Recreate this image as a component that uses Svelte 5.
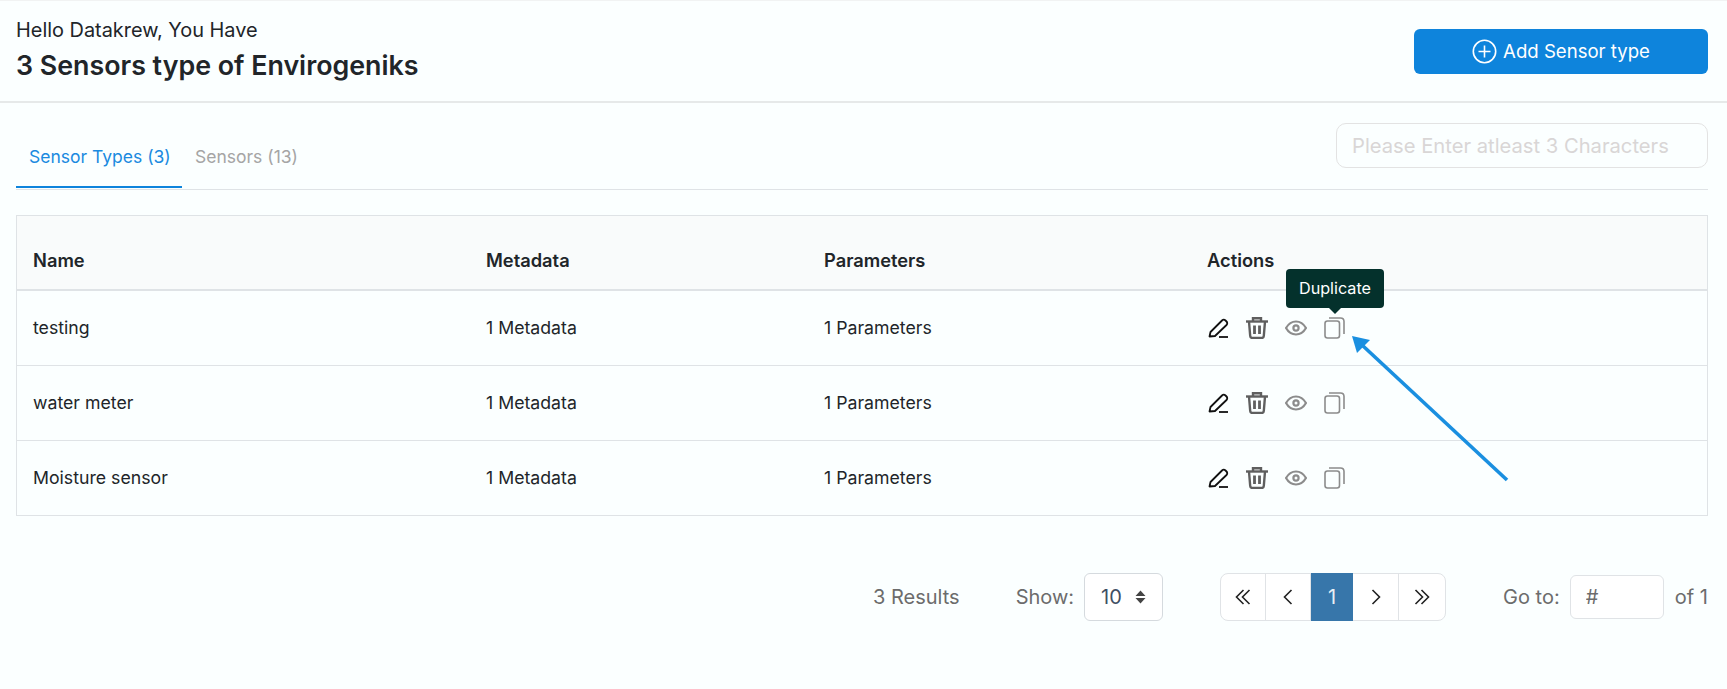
<script>
	const rows = ["testing", "water meter", "Moisture sensor"];
</script>

<div class="page">
	<header class="top">
		<div class="intro">
			<p class="hello">Hello Datakrew, You Have</p>
			<h1>3 Sensors type of Envirogeniks</h1>
		</div>
		<button class="add" type="button">
			<svg width="25" height="25" viewBox="0 0 25 25" fill="none" stroke="#fff">
				<circle cx="12.5" cy="12.5" r="11.2" stroke-width="1.6" />
				<path d="M12.5 6.5v12M6.5 12.5h12" stroke-width="1.6" />
			</svg>
			Add Sensor type
		</button>
	</header>

	<main class="content">
		<div class="tabbar">
			<div class="tabs">
				<span class="tab active">Sensor Types (3)</span>
				<span class="tab">Sensors (13)</span>
			</div>
			<input class="search" placeholder="Please Enter atleast 3 Characters" />
		</div>

		<div class="table">
			<div class="row head">
				<div>Name</div>
				<div>Metadata</div>
				<div>Parameters</div>
				<div>Actions</div>
			</div>
			{#each rows as name, i}
				<div class="row">
					<div>{name}</div>
					<div>1 Metadata</div>
					<div>1 Parameters</div>
					<div class="actions">
						<svg width="22" height="22" viewBox="0 0 22 22" fill="none" stroke="#111" stroke-width="1.8" stroke-linejoin="round">
							<path d="M2.500 19.500L3.500 15 15 3.500c1-1 2.500-1 3.500 0l1 1c1 1 1 2.500 0 3.500L8 19z" />
							<path d="M12 20h9" />
						</svg>
						<svg class="trash" width="22" height="22" viewBox="0 0 22 22" fill="none" stroke="#5f5f5f" stroke-width="2.400">
							<path d="M0 4.500h22" />
							<path d="M7 4.500V1.200h8v3.300" />
							<path d="M3 4.500l1.200 14.500c.1 1.200.8 1.900 1.900 1.900h9.800c1.100 0 1.800-.7 1.900-1.900L19 4.500" />
							<path d="M8.500 8.500v8.500M13.500 8.500v8.500" stroke-width="2.800" />
						</svg>
						<svg class="eye" width="22" height="16" viewBox="0 0 22 16" fill="none" stroke="#8c8c8c" stroke-width="2.200">
							<path d="M1 8c2.600-4.400 6-6.500 10-6.500S18.400 3.600 21 8c-2.600 4.400-6 6.500-10 6.500S3.600 12.400 1 8z" />
							<circle cx="11" cy="8" r="2.600" />
						</svg>
						<svg class="copy" width="21" height="22" viewBox="0 0 21 22" fill="none" stroke="#8c8c8c" stroke-width="1.600">
							<rect x="1" y="4" width="14.500" height="17" rx="2.500" />
							<path d="M5 1h11.500c2 0 3.500 1.500 3.500 3.500V17" />
						</svg>
						{#if i === 0}
							<div class="tooltip">Duplicate</div>
						{/if}
					</div>
				</div>
			{/each}
		</div>

		<div class="pager">
			<span class="results">3 Results</span>
			<span class="show">Show:</span>
			<div class="select">
				10
				<svg width="11" height="14" viewBox="0 0 11 14" fill="#444"><path d="M5.500 .5l5 5.500H.5zM5.500 13.500L.5 8h10z" /></svg>
			</div>
			<div class="pages">
				<span class="page-btn">
					<svg width="16" height="16" viewBox="0 0 16 16" fill="none" stroke="#222" stroke-width="1.600"><path d="M8.500 1L1.500 8l7 7M14.500 1l-7 7 7 7" /></svg>
				</span>
				<span class="page-btn">
					<svg width="10" height="16" viewBox="0 0 10 16" fill="none" stroke="#222" stroke-width="1.600"><path d="M8.500 1l-7 7 7 7" /></svg>
				</span>
				<span class="page-btn current">1</span>
				<span class="page-btn">
					<svg width="10" height="16" viewBox="0 0 10 16" fill="none" stroke="#222" stroke-width="1.600"><path d="M1.500 1l7 7-7 7" /></svg>
				</span>
				<span class="page-btn">
					<svg width="16" height="16" viewBox="0 0 16 16" fill="none" stroke="#222" stroke-width="1.600"><path d="M1.500 1l7 7-7 7M7.500 1l7 7-7 7" /></svg>
				</span>
			</div>
			<span class="goto">Go to:</span>
			<input class="goto-input" placeholder="#" />
			<span class="of">of 1</span>
		</div>
	</main>

	<!-- annotation drawn on top of the screenshot -->
	<svg class="arrow" width="1727" height="689" viewBox="0 0 1727 689" fill="none">
		<path d="M1507 480L1362 345" stroke="#1a8fe0" stroke-width="3.600" />
		<path d="M1352 336l18 4-13 13z" fill="#1a8fe0" />
	</svg>
</div>

<style>
	:global(body) {
		background: #fbffff;
	}
	.page {
		position: relative;
		height: 689px;
		overflow: hidden;
		background: #fbffff;
		color: #212529;
		font-family: Inter, "Liberation Sans", sans-serif;
		font-size: 17.7px;
		white-space: nowrap;
	}
	.top {
		display: flex;
		justify-content: space-between;
		align-items: center;
		box-sizing: border-box;
		height: 103px;
		padding: 0 19px 0 16px;
		border-top: 1px solid #f1f3f3;
		border-bottom: 2px solid #e6e9e9;
	}
	.intro {
		padding-bottom: 2px;
	}
	.hello {
		margin: 0 0 8px;
		font-size: 19.9px;
		line-height: 22px;
	}
	h1 {
		margin: 0;
		font-size: 26.8px;
		line-height: 32px;
		font-weight: 600;
	}
	.add {
		display: flex;
		align-items: center;
		justify-content: center;
		gap: 6px;
		width: 294px;
		height: 45px;
		padding: 0;
		border: 0;
		border-radius: 6px;
		background: #0e84dc;
		color: #fff;
		font: 400 18.6px Inter, "Liberation Sans", sans-serif;
	}
	.content {
		padding: 0 19px 0 16px;
	}
	.tabbar {
		display: flex;
		justify-content: space-between;
		align-items: flex-end;
		height: 86px;
		border-bottom: 1px solid #dfe3e6;
	}
	.tabs {
		display: flex;
		margin-bottom: 1px;
	}
	.tab {
		box-sizing: border-box;
		height: 66px;
		padding: 23px 13px 0;
		color: #a5a5a5;
		font-size: 17.5px;
		line-height: 24px;
	}
	.tab.active {
		color: #1a8ae0;
		border-bottom: 2px solid #0e84dc;
		width: 166px;
	}
	.search {
		box-sizing: border-box;
		width: 372px;
		height: 45px;
		margin-bottom: 21px;
		padding: 0 15px;
		border: 1px solid #e3e3e3;
		border-radius: 10px;
		background: #fbffff;
		font: 400 20.2px Inter, "Liberation Sans", sans-serif;
	}
	.search::placeholder {
		color: #d9d6d6;
	}
	.table {
		margin-top: 25px;
		border: 1px solid #dfe3e6;
		border-bottom: 0;
	}
	.row {
		display: grid;
		grid-template-columns: 453px 338px 383px 1fr;
		align-items: center;
		box-sizing: border-box;
		height: 75px;
		border-bottom: 1px solid #dfe3e6;
	}
	.row > div {
		padding: 0 0 2px 16px;
	}
	.head {
		padding-top: 17px;
		border-bottom-width: 2px;
		background: #f9fbfb;
		font-size: 18.3px;
		font-weight: 600;
	}
	.row > .actions {
		position: relative;
		display: flex;
		align-items: center;
		height: 100%;
		padding-bottom: 0;
	}
	.trash,
	.eye,
	.copy {
		margin-left: 17px;
	}
	.tooltip {
		position: absolute;
		left: 95px;
		top: -22px;
		width: 98px;
		height: 39px;
		border-radius: 4px;
		background: #04312c;
		color: #fff;
		font-size: 16.2px;
		line-height: 39px;
		text-align: center;
	}
	.tooltip::after {
		content: "";
		position: absolute;
		left: 43px;
		top: 39px;
		border: 6px solid transparent;
		border-top-color: #04312c;
		border-bottom: 0;
	}
	.pager {
		display: flex;
		align-items: center;
		height: 48px;
		margin-top: 57px;
		color: #6c6c6c;
		font-size: 20px;
	}
	.results {
		margin-left: 857px;
	}
	.show {
		margin-left: 56px;
	}
	.select {
		box-sizing: border-box;
		display: flex;
		align-items: center;
		justify-content: space-between;
		width: 79px;
		height: 48px;
		margin-left: 10px;
		padding: 0 16px 0 16px;
		border: 1px solid #d5dade;
		border-radius: 6px;
		background: #fff;
		color: #3f4f63;
	}
	.pages {
		display: grid;
		grid-template-columns: 45px 45px 42px 46px 46px;
		box-sizing: border-box;
		height: 48px;
		margin-left: 57px;
		border: 1px solid #e0e3e6;
		border-radius: 8px;
		background: #fff;
	}
	.page-btn {
		display: flex;
		align-items: center;
		justify-content: center;
		box-sizing: border-box;
		border-right: 1px solid #e0e3e6;
	}
	.page-btn:last-child {
		border-right: 0;
	}
	.current {
		margin: -1px 0;
		border: 0;
		background: #3776aa;
		color: #e8eff5;
	}
	.goto {
		margin-left: 57px;
	}
	.goto-input {
		box-sizing: border-box;
		width: 94px;
		height: 44px;
		margin-left: 10px;
		padding: 0 15px;
		border: 1px solid #e0e3e6;
		border-radius: 6px;
		background: #fff;
		font: 400 20px Inter, "Liberation Sans", sans-serif;
	}
	.goto-input::placeholder {
		color: #6c6c6c;
	}
	.of {
		margin-left: 11px;
	}
	.arrow {
		position: absolute;
		left: 0;
		top: 0;
		pointer-events: none;
	}
</style>
